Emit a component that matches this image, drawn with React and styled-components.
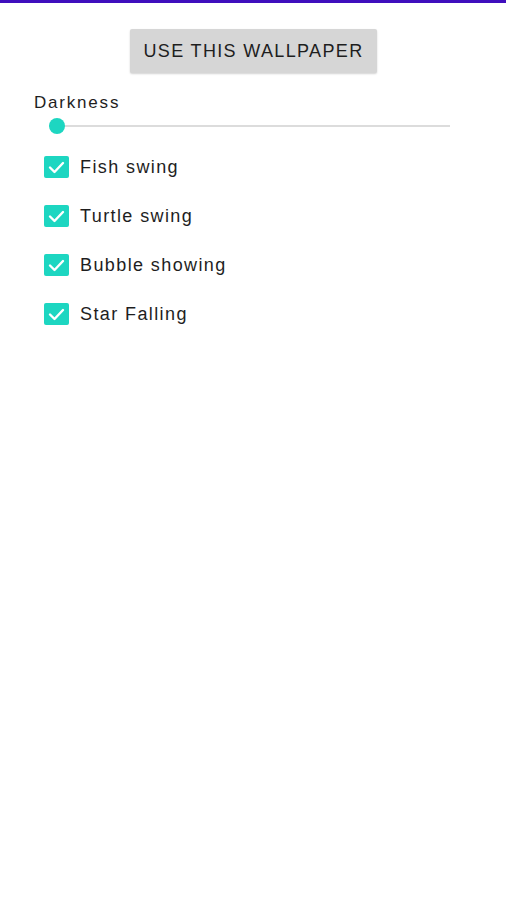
import React from "react";
import styled, { createGlobalStyle } from "styled-components";

const Global = createGlobalStyle`
  html, body { margin: 0; padding: 0; background: #fff; }
  body { font-family: "Liberation Sans", Arial, sans-serif; }
`;

const Screen = styled.div`
  width: 506px;
  min-height: 900px;
  background: #fff;
  border-top: 3px solid #3f0fbd;
  box-sizing: border-box;
  display: flex;
  flex-direction: column;
`;

const ButtonRow = styled.div`
  display: flex;
  justify-content: center;
  padding-top: 26px;
`;

const WallButton = styled.button`
  width: 247px;
  height: 44px;
  border: none;
  background: #d6d6d6;
  border-radius: 2px;
  box-shadow: 0 1px 2px rgba(0,0,0,0.18);
  font-family: "Liberation Sans", Arial, sans-serif;
  font-size: 18px;
  color: #1e1e1e;
  letter-spacing: 1.35px;
  padding: 0 0 0 1px;
`;

const Section = styled.div`
  padding: 20px 0 0 34px;
`;

const Label = styled.div`
  font-family: "Liberation Sans", Arial, sans-serif;
  font-size: 17px;
  color: #1e1e1e;
  line-height: 20px;
  letter-spacing: 1.8px;
`;

const Slider = styled.div`
  position: relative;
  width: 401px;
  height: 16px;
  margin-top: 5px;
  margin-left: 15px;
  display: flex;
  align-items: center;
`;

const Track = styled.div`
  flex: 1;
  height: 2px;
  background: #dcdcdc;
`;

const Thumb = styled.div`
  position: absolute;
  left: 0;
  top: 0;
  width: 16px;
  height: 16px;
  border-radius: 50%;
  background: #1dd6c1;
`;

const List = styled.div`
  display: flex;
  flex-direction: column;
  gap: 25px;
  padding: 21px 0 0 44px;
`;

const Row = styled.label`
  display: flex;
  align-items: center;
  gap: 11px;
  height: 24px;
`;

const Box = styled.span`
  width: 25px;
  height: 22px;
  border-radius: 2px;
  background: #1dd6c1;
  display: flex;
  align-items: center;
  justify-content: center;
`;

const RowText = styled.span`
  font-family: "Liberation Sans", Arial, sans-serif;
  font-size: 18px;
  color: #1e1e1e;
  letter-spacing: 1.4px;
`;

const Check = () => (
  <svg width="17" height="13" viewBox="0 0 17 13">
    <path d="M2 6.5 L6.5 11 L15 2" fill="none" stroke="#fff" strokeWidth="2.4" strokeLinecap="round" strokeLinejoin="round" />
  </svg>
);

const items = ["Fish swing", "Turtle swing", "Bubble showing", "Star Falling"];

export default function App() {
  return (
    <>
      <Global />
      <Screen>
        <ButtonRow>
          <WallButton>USE THIS WALLPAPER</WallButton>
        </ButtonRow>
        <Section>
          <Label>Darkness</Label>
          <Slider>
            <Track />
            <Thumb />
          </Slider>
        </Section>
        <List>
          {items.map((t) => (
            <Row key={t}>
              <Box><Check /></Box>
              <RowText>{t}</RowText>
            </Row>
          ))}
        </List>
      </Screen>
    </>
  );
}
